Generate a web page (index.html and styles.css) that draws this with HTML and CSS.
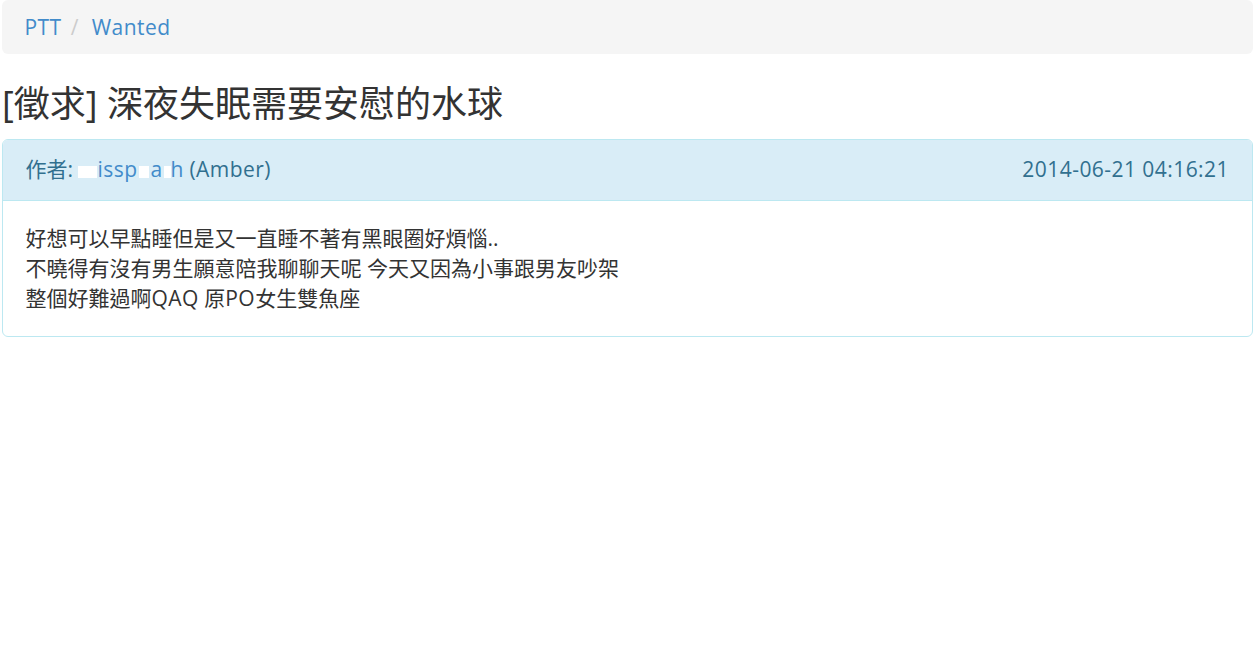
FILE: index.html
```html
<!DOCTYPE html>
<html lang="zh-Hant">
<head>
<meta charset="utf-8">
<title>[徵求] 深夜失眠需要安慰的水球</title>
<link rel="stylesheet" href="styles.css">
</head>
<body>
<div class="container">
  <ol class="breadcrumb">
    <li><a href="#">PTT</a></li>
    <li><a href="#">Wanted</a></li>
  </ol>
  <h3 class="title">[徵求] 深夜失眠需要安慰的水球</h3>
  <div class="panel">
    <div class="panel-heading">
      <span class="author">作者: <a href="#" class="user"><span class="mask m1"></span>issp<span class="mask m2"></span>a<span class="mask m3"></span>h</a> <span class="latin">(Amber)</span></span>
      <span class="date latin">2014-06-21 04:16:21</span>
    </div>
    <div class="panel-body">
      好想可以早點睡但是又一直睡不著有黑眼圈好煩惱..<br>
      不曉得有沒有男生願意陪我聊聊天呢 今天又因為小事跟男友吵架<br>
      整個好難過啊<span class="latin">QAQ</span> 原<span class="latin">PO</span>女生雙魚座
    </div>
  </div>
</div>
</body>
</html>
```

FILE: styles.css
```css
html, body {
  margin: 0;
  padding: 0;
  background: #fff;
}
body {
  font-family: "Open Sans", "Noto Sans CJK TC", sans-serif;
  font-size: 21px;
  line-height: 30px;
  color: #333;
}
a {
  color: #428bca;
  text-decoration: none;
}
.latin {
  letter-spacing: 0.45px;
}
.container {
  margin: 0 1.5px 0 2px;
}
.breadcrumb {
  list-style: none;
  margin: 0 0 30px;
  padding: 12px 22.5px;
  background: #f5f5f5;
  border-radius: 6px;
  display: flex;
  letter-spacing: 0.45px;
}
.breadcrumb li + li::before {
  content: "/";
  color: #ccc;
  padding: 0 13px 0 9px;
}
.title {
  margin: 30px 0 15px;
  font-size: 36px;
  line-height: 39.6px;
  font-weight: 400;
  color: #333;
}
.panel {
  border: 1px solid #bce8f1;
  border-radius: 6px;
  background: #fff;
  overflow: hidden;
}
.panel-heading {
  display: flex;
  justify-content: space-between;
  padding: 14px 22.5px 16px;
  background: #d9edf7;
  border-bottom: 1px solid #bce8f1;
  color: #31708f;
}
.user {
  color: #428bca;
  letter-spacing: 0.45px;
}
.mask {
  display: inline-block;
  background: #fff;
  height: 12px;
  vertical-align: -1px;
}
.m1 { width: 19px; }
.m2 { width: 10px; margin-left: 2px; margin-right: 1px; }
.m3 { width: 7px; margin-left: 1px; }
.panel-body {
  padding: 22.5px;
  color: #333;
}
```
